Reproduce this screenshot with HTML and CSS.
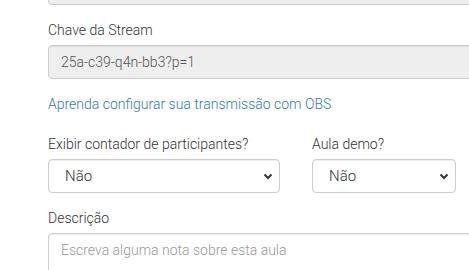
FILE: index.html
```html
<!DOCTYPE html>
<html lang="pt-BR">
  <head>
    <meta charset="utf-8">
    <title>Configurar aula</title>
    <meta name="viewport" content="width=device-width, initial-scale=1.0">
    <link rel="stylesheet" href="styles.css">
  </head>
  <body>
    <main class="page">

      <form novalidate>

        <div class="form-group form-group--cut">
          <input class="form-control" type="text" value="" readonly>
        </div>

        <div class="form-group">
          <label for="stream-key">Chave da Stream</label>
          <input id="stream-key" class="form-control" type="text" value="25a-c39-q4n-bb3?p=1" readonly>
        </div>

        <p class="help-link"><a href="#">Aprenda configurar sua transmissão com OBS</a></p>

        <div class="row">
          <div class="form-group">
            <label for="show-counter">Exibir contador de participantes?</label>
            <div class="select-wrap">
              <select id="show-counter" class="form-control form-control--select">
                <option>Não</option>
                <option>Sim</option>
              </select>
              <svg class="select-arrow" width="10" height="7" viewBox="0 0 10 7" aria-hidden="true"><polyline points="1.5,1.5 5,5 8.5,1.5" fill="none" stroke="#333" stroke-width="2"/></svg>
            </div>
          </div>
          <div class="form-group">
            <label for="demo-class">Aula demo?</label>
            <div class="select-wrap">
              <select id="demo-class" class="form-control form-control--select">
                <option>Não</option>
                <option>Sim</option>
              </select>
              <svg class="select-arrow" width="10" height="7" viewBox="0 0 10 7" aria-hidden="true"><polyline points="1.5,1.5 5,5 8.5,1.5" fill="none" stroke="#333" stroke-width="2"/></svg>
            </div>
          </div>
        </div>

        <div class="form-group">
          <label for="description">Descrição</label>
          <textarea id="description" class="form-control" rows="4" placeholder="Escreva alguma nota sobre esta aula"></textarea>
        </div>

      </form>

    </main>
  </body>
</html>
```

FILE: styles.css
```css
html {
  box-sizing: border-box;
}

*,
*:before,
*:after {
  box-sizing: inherit;
}

body {
  margin: 0;
  overflow: hidden;
  background: #fff;
  color: #333;
  font-family: Roboto, "Helvetica Neue", Arial, sans-serif;
  font-size: 14px;
  line-height: 20px;
}

.page {
  width: 540px;
  padding-left: 48px;
}

.form-group {
  margin-bottom: 15px;
}

.form-group--cut {
  margin-top: -29px;
}

label {
  display: block;
  margin-bottom: 5px;
  font-weight: 300;
  color: #333;
}

.form-control {
  display: block;
  width: 100%;
  height: 34px;
  padding: 6px 12px;
  font-family: Roboto, "Helvetica Neue", Arial, sans-serif;
  font-size: 14px;
  font-weight: 300;
  line-height: 20px;
  color: #555;
  background: #fff;
  border: 1px solid #ccc;
  border-radius: 4px;
  box-shadow: inset 0 1px 1px rgba(0, 0, 0, .075);
}

.form-control[readonly] {
  background: #eee;
}

.select-wrap {
  position: relative;
}

.form-control--select {
  -webkit-appearance: none;
  appearance: none;
  padding-left: 16px;
  font-size: 15px;
  color: #333;
}

.select-arrow {
  position: absolute;
  right: 7px;
  top: 14px;
  pointer-events: none;
}

textarea.form-control {
  height: auto;
  resize: vertical;
}

.form-control::placeholder {
  color: #999;
}

.help-link {
  margin: 0 0 20px;
  font-weight: 300;
}

.help-link a {
  color: #337ab7;
  text-decoration: none;
}

.row {
  display: grid;
  grid-template-columns: 232px 144px;
  column-gap: 32px;
}
```
